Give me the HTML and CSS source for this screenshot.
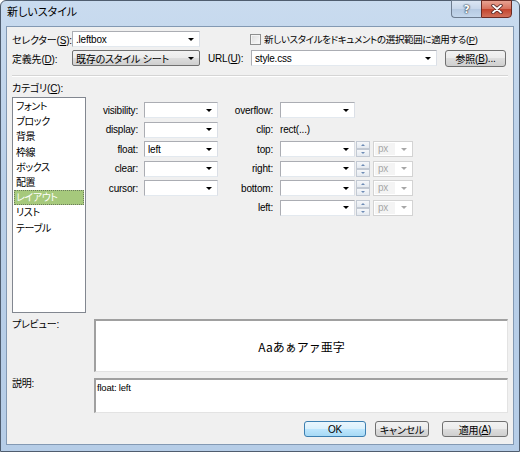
FILE: index.html
```html
<!DOCTYPE html>
<html lang="ja">
<head>
  <meta charset="UTF-8" />
  <title>新しいスタイル</title>
  <link rel="stylesheet" href="styles.css">
</head>
<body>
  <div class="window">
    <header class="titlebar">
      <div class="title">新しいスタイル</div>
      <div class="caption-btns">
        <div class="cap-btn help">?</div>
        <div class="cap-btn close">
          <svg width="12" height="10" viewBox="0 0 12 10">
            <path d="M2 1.5 L10 8.5 M10 1.5 L2 8.5" stroke="#4a1e1e" stroke-width="3.4" stroke-linecap="round"/>
            <path d="M2 1.5 L10 8.5 M10 1.5 L2 8.5" stroke="#fff" stroke-width="1.8" stroke-linecap="round"/>
          </svg>
        </div>
      </div>
    </header>

    <div class="client">
      <div class="row">
        <div class="lbl">セレクター(<u>S</u>):</div>
        <div class="combo w-sel"><span class="val">.leftbox</span><span class="arrow"></span></div>
        <div class="check-wrap"><span class="checkbox"></span>新しいスタイルをドキュメントの選択範囲に適用する(<u>P</u>)</div>
      </div>
      <div class="row">
        <div class="lbl">定義先(<u>D</u>):</div>
        <div class="combo combo-btn w-sel"><span class="val">既存のスタイル シート</span><span class="arrow"></span></div>
        <div class="lbl-url">URL(<u>U</u>):</div>
        <div class="combo w-url"><span class="val">style.css</span><span class="arrow"></span></div>
        <div class="btn btn-browse">参照(<u>B</u>)...</div>
      </div>

      <div class="separator"></div>

      <div class="cat-label">カテゴリ(<u>C</u>):</div>
      <div class="main">
        <ul class="listbox">
          <li>フォント</li>
          <li>ブロック</li>
          <li>背景</li>
          <li>枠線</li>
          <li>ボックス</li>
          <li>配置</li>
          <li class="selected">レイアウト</li>
          <li>リスト</li>
          <li>テーブル</li>
        </ul>

        <div class="props">
          <div class="plbl">visibility:</div>
          <div class="combo"><span class="val"></span><span class="arrow"></span></div>
          <div class="plbl2">overflow:</div>
          <div class="combo"><span class="val"></span><span class="arrow"></span></div>

          <div class="plbl">display:</div>
          <div class="combo"><span class="val"></span><span class="arrow"></span></div>
          <div class="plbl2">clip:</div>
          <div class="plain">rect(...)</div>

          <div class="plbl">float:</div>
          <div class="combo"><span class="val">left</span><span class="arrow"></span></div>
          <div class="plbl2">top:</div>
          <div class="combo"><span class="val"></span><span class="arrow"></span></div>
          <div class="spin"><span class="up"></span><span class="down"></span></div>
          <div class="combo unit"><span class="val">px</span><span class="arrow"></span></div>

          <div class="plbl">clear:</div>
          <div class="combo"><span class="val"></span><span class="arrow"></span></div>
          <div class="plbl2">right:</div>
          <div class="combo"><span class="val"></span><span class="arrow"></span></div>
          <div class="spin"><span class="up"></span><span class="down"></span></div>
          <div class="combo unit"><span class="val">px</span><span class="arrow"></span></div>

          <div class="plbl">cursor:</div>
          <div class="combo"><span class="val"></span><span class="arrow"></span></div>
          <div class="plbl2">bottom:</div>
          <div class="combo"><span class="val"></span><span class="arrow"></span></div>
          <div class="spin"><span class="up"></span><span class="down"></span></div>
          <div class="combo unit"><span class="val">px</span><span class="arrow"></span></div>

          <div class="plbl2">left:</div>
          <div class="combo"><span class="val"></span><span class="arrow"></span></div>
          <div class="spin"><span class="up"></span><span class="down"></span></div>
          <div class="combo unit"><span class="val">px</span><span class="arrow"></span></div>
        </div>
      </div>

      <div class="box-row preview-row">
        <div class="box-lbl">プレビュー:</div>
        <div class="sunken preview">Aaあぁアァ亜字</div>
      </div>
      <div class="box-row desc-row">
        <div class="box-lbl">説明:</div>
        <div class="sunken desc">float: left</div>
      </div>

      <div class="buttons">
        <div class="btn btn-ok">OK</div>
        <div class="btn btn-cancel">キャンセル</div>
        <div class="btn btn-apply">適用(<u>A</u>)</div>
      </div>
    </div>
  </div>
</body>
</html>
```

FILE: styles.css
```css
* {
  box-sizing: border-box;
}

body {
  margin: 0;
  background: #fff;
  font-family: "Liberation Sans", "Noto Sans CJK JP", sans-serif;
  font-size: 10px;
  font-feature-settings: "palt";
  letter-spacing: -0.2px;
  color: #000;
  white-space: nowrap;
}

u {
  text-decoration: underline;
  text-underline-offset: 1px;
}

.window {
  width: 520px;
  height: 452px;
  border: 1px solid #4f5d6f;
  border-radius: 6px 6px 0 0;
  background: linear-gradient(#c9dbef, #b9cfe8 40%, #b6cde7);
  display: flex;
  flex-direction: column;
}

/* title bar */
.titlebar {
  height: 25px;
  display: flex;
  justify-content: space-between;
  align-items: flex-start;
  padding-left: 6px;
}
.title {
  font-size: 11px;
  line-height: 22px;
  letter-spacing: 0;
}
.caption-btns {
  display: flex;
  margin-right: 7px;
  margin-top: -1px;
}
.cap-btn {
  height: 18px;
  display: flex;
  align-items: center;
  justify-content: center;
  border: 1px solid #6d7c8f;
}
.help {
  width: 30px;
  border-radius: 0 0 0 4px;
  border-right: none;
  background: linear-gradient(#dbe6f3, #c6d6ea 50%, #b5c9e1 50%, #c4d7ec);
  color: #fff;
  font-family: "DejaVu Sans", sans-serif;
  font-weight: bold;
  font-size: 11px;
  text-shadow: 0 0 1px #33404f, 0 0 2px #33404f, 0 0 1px #33404f;
}
.close {
  width: 31px;
  border-color: #6c2a22;
  border-radius: 0 0 4px 0;
  background: linear-gradient(#e8a393, #d7705c 50%, #c2422b 50%, #d1705a);
}

/* client area */
.client {
  flex: 1;
  margin: 0 5px 6px 5px;
  border: 1px solid #8399b3;
  background: #f0f0f0;
  padding: 4px 5px 0 5px;
}

.row {
  display: flex;
  align-items: center;
  height: 16px;
  margin-bottom: 3px;
}
.lbl {
  width: 60px;
  flex-shrink: 0;
}

.combo {
  height: 16px;
  background: #fff;
  border: 1px solid #abadb3;
  border-right-color: #dbdfe6;
  border-bottom-color: #e3e9ef;
  display: flex;
  align-items: center;
  padding-left: 3px;
}
.combo .val {
  flex: 1;
  overflow: hidden;
}
.arrow {
  width: 0;
  height: 0;
  border-left: 3px solid transparent;
  border-right: 3px solid transparent;
  border-top: 3px solid #000;
  margin-right: 5px;
}

.w-sel {
  width: 128px;
}
.w-url {
  width: 186px;
}
.combo-btn {
  border: 1px solid #707070;
  border-radius: 2px;
  background: linear-gradient(#f2f2f2, #ebebeb 50%, #dddddd 50%, #cfcfcf);
}

.check-wrap {
  display: flex;
  align-items: center;
  margin-left: 50px;
  font-size: 9.5px;
  letter-spacing: -0.35px;
}
.checkbox {
  width: 11px;
  height: 11px;
  border: 1px solid #8e8f8f;
  background: linear-gradient(135deg, #dcdcdc, #fbfbfb);
  box-shadow: inset 0 0 0 1px #f4f4f4;
  margin-right: 3px;
}

.lbl-url {
  margin-left: 8px;
  width: 43px;
}

.btn {
  height: 16px;
  border: 1px solid #707070;
  border-radius: 3px;
  background: linear-gradient(#f2f2f2, #ebebeb 50%, #dddddd 50%, #cfcfcf);
  display: flex;
  align-items: center;
  justify-content: center;
}
.btn-browse {
  width: 61px;
  height: 17px;
  margin-left: 8px;
}

.separator {
  height: 2px;
  border-top: 1px solid #d5d5d5;
  border-bottom: 1px solid #fff;
  margin-top: 9px;
}

.cat-label {
  line-height: 14px;
  margin-top: 5px;
  margin-bottom: 1px;
}

.main {
  display: flex;
  align-items: flex-start;
}

.listbox {
  list-style: none;
  margin: 0;
  width: 74px;
  height: 216px;
  padding: 1px;
  background: #fff;
  border: 1px solid #828790;
}
.listbox li {
  height: 15.2px;
  line-height: 15px;
  padding-left: 2px;
  font-size: 10px;
  letter-spacing: -0.4px;
}
.listbox li.selected {
  background: #a6c97c;
  color: #fff;
  outline: 1px dotted #6b7a5c;
  outline-offset: -1px;
}

.props {
  margin-left: 6px;
  margin-top: 5px;
  display: grid;
  grid-template-columns: 52px 74px 62px 75px 18px 40px;
  grid-auto-rows: 16px;
  row-gap: 3.5px;
  align-items: center;
}
.plbl {
  grid-column: 1;
  text-align: right;
  padding-right: 6px;
}
.plbl2 {
  grid-column: 3;
  text-align: right;
  padding-right: 7px;
}
.plain {
  grid-column: 4 / span 3;
}

.spin {
  margin-left: 1px;
  width: 14px;
  height: 16px;
  display: flex;
  flex-direction: column;
}
.spin span {
  flex: 1;
  border: 1px solid #c2c9d3;
  background: linear-gradient(#f5f7fa, #e4e9ef);
  display: flex;
  align-items: center;
  justify-content: center;
}
.spin .up::after {
  content: "";
  border-left: 2px solid transparent;
  border-right: 2px solid transparent;
  border-bottom: 2px solid #6d8bb5;
}
.spin .down::after {
  content: "";
  border-left: 2px solid transparent;
  border-right: 2px solid transparent;
  border-top: 2px solid #6d8bb5;
}

.combo.unit {
  border: 1px solid #d3d3d3;
  color: #a7a7a7;
  padding-left: 1px;
  background: #fff;
}
.combo.unit .val {
  background: #f4f4f4;
  line-height: 12px;
  padding-left: 3px;
  margin-right: 6px;
}
.combo.unit .arrow {
  border-top-color: #a7a7a7;
}

.box-row {
  display: flex;
  align-items: flex-start;
}
.box-lbl {
  width: 82px;
  flex-shrink: 0;
  line-height: 12px;
}
.sunken {
  flex: 1;
  background: #fff;
  border-top: 2px solid #a0a0a0;
  border-left: 2px solid #a0a0a0;
  border-right: 1px solid #e3e3e3;
  border-bottom: 1px solid #e3e3e3;
}
.preview-row {
  margin-top: 6px;
}
.preview {
  height: 53px;
  display: flex;
  align-items: center;
  justify-content: center;
  font-family: "Noto Sans CJK JP", sans-serif;
  font-size: 12px;
  font-feature-settings: normal;
  letter-spacing: 0;
}
.desc-row {
  margin-top: 6px;
}
.desc {
  height: 35px;
  padding: 2px 0 0 1px;
  font-size: 9.5px;
}

.buttons {
  display: flex;
  justify-content: flex-end;
  margin-top: 8px;
}
.btn-ok {
  width: 62px;
  border-color: #3c7fb1;
  background: linear-gradient(#eaf6fd, #d9f0fc 50%, #bee6fd 50%, #a7d9f5);
}
.btn-cancel {
  width: 54px;
  margin-left: 9px;
}
.btn-apply {
  width: 66px;
  margin-left: 13px;
}
```
